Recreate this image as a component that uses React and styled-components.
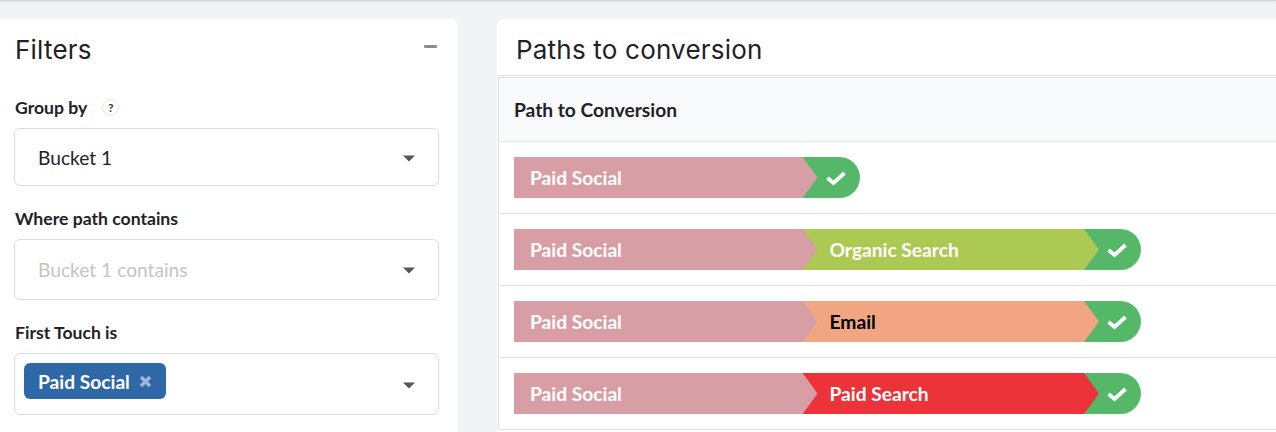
import React from "react"
import styled, {createGlobalStyle} from "styled-components"

const GlobalStyle = createGlobalStyle`
  html, body {
    margin: 0;
    height: 432px;
    overflow: hidden;
    background: #f2f3f5;
    font-family: "Lato", "Liberation Sans", sans-serif;
  }
`

const paths = [
  [],
  [{label: "Organic Search", bg: "#abc953", color: "#fff"}],
  [{label: "Email", bg: "#f2a582", color: "#000"}],
  [{label: "Paid Search", bg: "#ec3339", color: "#fff"}],
]

const Caret = () => (
  <CaretIcon width="12" height="7" viewBox="0 0 12 7">
    <path d="M0 0.5 H12 L6 6.5 Z" fill="#555" />
  </CaretIcon>
)

const Check = () => (
  <svg width="20" height="16" viewBox="0 0 20 16">
    <path d="M1.5 8 L7.5 13 L18.5 3" fill="none" stroke="#fff" strokeWidth="3.8" />
  </svg>
)

const Segment = ({label, bg, color, first}) => (
  <Seg $bg={bg} $color={color} $first={first}>
    {label}
  </Seg>
)

const App = () => {
  return (
    <Page>
      <GlobalStyle />
      <TopEdge />
      <Columns>
        <FiltersCard>
          <FiltersHead>
            <CardTitle>Filters</CardTitle>
            <Collapse />
          </FiltersHead>
          <Label>
            Group by <Help>?</Help>
          </Label>
          <Select $height={58}>
            <Value>Bucket 1</Value>
            <Caret />
          </Select>
          <Label>Where path contains</Label>
          <Select $height={61}>
            <Value $placeholder>Bucket 1 contains</Value>
            <Caret />
          </Select>
          <Label>First Touch is</Label>
          <Select $height={62} $tight>
            <Tag>
              Paid Social
              <TagClose viewBox="0 0 13 13" width="13" height="13">
                <path d="M2 2 L11 11 M11 2 L2 11" stroke="#9db7d6" strokeWidth="3.6" fill="none" />
              </TagClose>
            </Tag>
            <Caret />
          </Select>
        </FiltersCard>
        <PathsCard>
          <PathsTitle>Paths to conversion</PathsTitle>
          <Table>
            <TableHead>Path to Conversion</TableHead>
            {paths.map((steps, i) => (
              <Row key={i}>
                <Segment label="Paid Social" bg="#d79ea6" color="#fff" first />
                {steps.map(step => (
                  <Segment key={step.label} {...step} />
                ))}
                <Done>
                  <Check />
                </Done>
              </Row>
            ))}
          </Table>
        </PathsCard>
      </Columns>
    </Page>
  )
}

export default App

const Page = styled.div`
  width: 1276px;
  height: 432px;
  overflow: hidden;
  background: #f2f3f5;
`
const TopEdge = styled.div`
  height: 1px;
  background: #d9dadd;
  box-shadow: 0 1px 2px rgba(0, 0, 0, 0.12);
`
const Columns = styled.div`
  display: flex;
  gap: 39px;
  padding-top: 18px;
  align-items: flex-start;
`
const FiltersCard = styled.section`
  width: 458px;
  flex: none;
  height: 430px;
  box-sizing: border-box;
  padding: 0 19px 0 14px;
  background: #fff;
  border-radius: 0 6px 0 0;
`
const FiltersHead = styled.div`
  display: flex;
  justify-content: space-between;
  align-items: flex-start;
  height: 76px;
`
const CardTitle = styled.h2`
  margin: 16px 0 0 1px;
  font-family: "Inter", "Open Sans", sans-serif;
  font-weight: 400;
  font-size: 26px;
  line-height: 30px;
  letter-spacing: 0.2px;
  color: #212226;
`
const Collapse = styled.span`
  width: 13px;
  height: 3px;
  margin: 26px 2px 0 0;
  background: #8c8c8c;
  border-radius: 1px;
`
const Label = styled.div`
  display: flex;
  align-items: center;
  gap: 15px;
  box-sizing: border-box;
  height: 26px;
  padding-bottom: 2px;
  margin: 0 0 7px 1px;
  font-size: 17.6px;
  font-weight: 700;
  color: #212226;
`
const Help = styled.span`
  display: inline-flex;
  align-items: center;
  justify-content: center;
  box-sizing: border-box;
  width: 17px;
  height: 17px;
  border: 1px solid #e6e6e6;
  border-radius: 50%;
  font-size: 12px;
  font-weight: 900;
  color: #444;
`
const Select = styled.div`
  display: flex;
  align-items: center;
  justify-content: space-between;
  box-sizing: border-box;
  height: ${p => p.$height}px;
  margin-bottom: 20px;
  padding: 0 23px 0 ${p => (p.$tight ? 9 : 23)}px;
  background: #fff;
  border: 1px solid #dcdcdc;
  border-radius: 6px;
`
const Value = styled.span`
  font-size: 19.2px;
  color: ${p => (p.$placeholder ? "#c4c4c4" : "#212226")};
`
const CaretIcon = styled.svg`
  flex: none;
  margin-top: 2px;
`
const Tag = styled.span`
  display: inline-flex;
  align-items: center;
  gap: 9px;
  height: 36px;
  box-sizing: border-box;
  padding: 0 14px;
  margin-top: -6px;
  background: #2e68a6;
  border-radius: 6px;
  font-size: 19.2px;
  font-weight: 700;
  color: #fff;
`
const TagClose = styled.svg`
  flex: none;
`
const PathsCard = styled.section`
  flex: 1;
  min-width: 0;
  height: 430px;
  background: #fff;
  border-radius: 6px 0 0 0;
`
const PathsTitle = styled.h2`
  margin: 0;
  height: 57px;
  box-sizing: border-box;
  padding: 16px 0 0 19px;
  font-family: "Inter", "Open Sans", sans-serif;
  font-weight: 400;
  font-size: 26px;
  line-height: 30px;
  letter-spacing: 0.2px;
  color: #212226;
  border-bottom: 1px solid #e2e2e2;
`
const Table = styled.div`
  margin: 1px 0 0 1px;
  border-top: 1px solid #dcdcdc;
  border-left: 1px solid #e2e2e2;
`
const TableHead = styled.div`
  display: flex;
  align-items: center;
  height: 64px;
  box-sizing: border-box;
  padding-left: 15px;
  background: #f9fafb;
  border-bottom: 1px solid #e6e6e6;
  font-size: 19.2px;
  font-weight: 700;
  color: #212226;
`
const Row = styled.div`
  display: flex;
  align-items: flex-start;
  height: 72px;
  box-sizing: border-box;
  padding: 15px 0 0 15px;
  border-bottom: 1px solid #e2e2e2;
`
const Seg = styled.div`
  position: relative;
  z-index: 1;
  display: flex;
  align-items: center;
  flex: none;
  box-sizing: border-box;
  width: ${p => (p.$first ? 288.5 : 281.5)}px;
  height: 41px;
  padding-left: ${p => (p.$first ? 16 : 27)}px;
  background: ${p => p.$bg};
  color: ${p => p.$color};
  font-size: 19.2px;
  font-weight: 700;

  &:first-child {
    z-index: 2;
  }

  &::after {
    content: "";
    position: absolute;
    left: 100%;
    top: 0;
    width: 15px;
    height: 41px;
    background: ${p => p.$bg};
    clip-path: polygon(0 0, 100% 50%, 0 100%);
  }
`
const Done = styled.div`
  display: flex;
  align-items: center;
  justify-content: flex-end;
  flex: none;
  box-sizing: border-box;
  width: 57px;
  height: 41px;
  padding-right: 14px;
  background: #55b868;
  border-radius: 0 21px 21px 0;
`
